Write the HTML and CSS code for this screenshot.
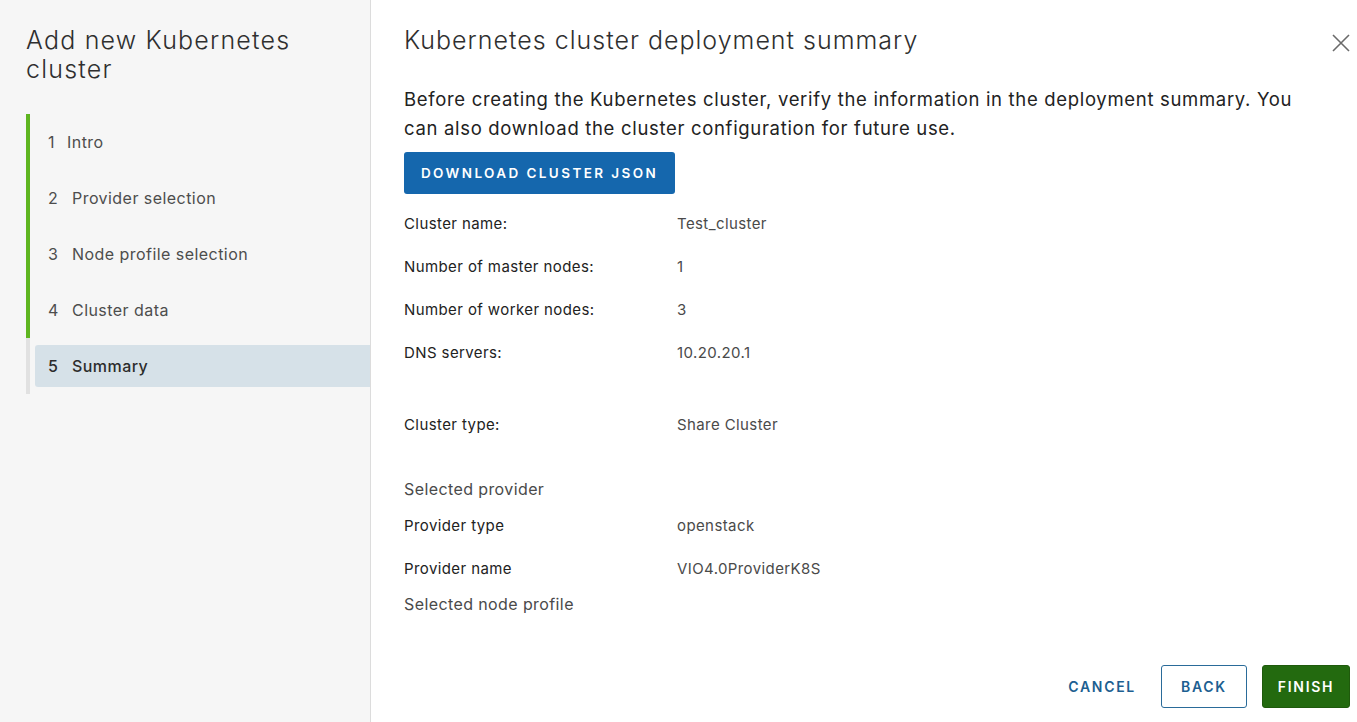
FILE: index.html
```html
<!DOCTYPE html>
<html>
<head>
<meta charset="utf-8">
<link rel="stylesheet" href="styles.css">
</head>
<body>
<div class="wizard">
  <aside class="side">
    <h1 class="side-title">Add new Kubernetes cluster</h1>
    <ol class="steps">
      <li class="step done"><span class="num">1</span><span class="lbl lbl-narrow">Intro</span></li>
      <li class="step done"><span class="num">2</span><span class="lbl">Provider selection</span></li>
      <li class="step done"><span class="num">3</span><span class="lbl">Node profile selection</span></li>
      <li class="step done"><span class="num">4</span><span class="lbl">Cluster data</span></li>
      <li class="step current"><span class="num">5</span><span class="lbl">Summary</span></li>
    </ol>
  </aside>
  <main class="main">
    <header class="main-head">
      <h2 class="main-title">Kubernetes cluster deployment summary</h2>
      <button class="close" aria-label="Close">
        <svg width="20" height="20" viewBox="0 0 20 20"><path d="M2 2 L18 18 M18 2 L2 18" stroke="#6a6a6a" stroke-width="1.6" fill="none"/></svg>
      </button>
    </header>
    <p class="intro">Before creating the Kubernetes cluster, verify the information in the deployment summary. You can also download the cluster configuration for future use.</p>
    <button class="btn-primary">DOWNLOAD CLUSTER JSON</button>
    <div class="rows">
      <div class="row"><span class="k">Cluster name:</span><span class="v">Test_cluster</span></div>
      <div class="row"><span class="k">Number of master nodes:</span><span class="v">1</span></div>
      <div class="row"><span class="k">Number of worker nodes:</span><span class="v">3</span></div>
      <div class="row"><span class="k">DNS servers:</span><span class="v">10.20.20.1</span></div>
      <div class="row row-gap"><span class="k">Cluster type:</span><span class="v">Share Cluster</span></div>
      <div class="section section-first">Selected provider</div>
      <div class="row"><span class="k">Provider type</span><span class="v">openstack</span></div>
      <div class="row"><span class="k">Provider name</span><span class="v">VIO4.0ProviderK8S</span></div>
      <div class="section">Selected node profile</div>
    </div>
    <footer class="actions">
      <button class="btn-link">CANCEL</button>
      <button class="btn-outline">BACK</button>
      <button class="btn-success">FINISH</button>
    </footer>
  </main>
</div>
</body>
</html>
```
FILE: styles.css
```css
* { box-sizing: border-box; }
html, body { margin: 0; padding: 0; height: 100%; }
body {
  font-family: "Inter", "Lato", sans-serif;
  color: #313131;
  background: #fff;
}
.wizard {
  display: flex;
  width: 1357px;
  height: 722px;
}
.side {
  width: 371px;
  flex: none;
  background: #f6f6f6;
  border-right: 1px solid #dcdcdc;
  padding: 26px 0 0 26px;
}
.side-title {
  margin: 0 0 30px 0;
  font-size: 25px;
  font-weight: 300;
  line-height: 29px;
  letter-spacing: 1.2px;
  color: #2f2f2f;
  width: 320px;
}
.steps {
  list-style: none;
  margin: 0;
  padding: 0;
  border-left: 4px solid #e1e1e1;
}
.step {
  position: relative;
  display: flex;
  align-items: center;
  height: 56px;
  font-size: 16px;
  letter-spacing: 0.45px;
  color: #4d4d4d;
  margin-left: -4px;
  border-left: 4px solid transparent;
}
.step.done { border-left-color: #5eb520; }
.step .num { width: 24px; padding-left: 18px; box-sizing: content-box; }
.step .lbl-narrow { margin-left: -5px; }
.step.current .num, .step.current .lbl { font-weight: 500; color: #2c2c2c; }
.step.current::before {
  content: "";
  position: absolute;
  left: 5px;
  right: 0;
  top: 7px;
  height: 42px;
  background: #d6e1e8;
  border-radius: 3px 0 0 3px;
}
.step.current span { position: relative; }

.main {
  flex: 1;
  position: relative;
  padding: 24px 0 0 33px;
}
.main-head {
  display: flex;
  justify-content: space-between;
  align-items: flex-start;
}
.main-title {
  margin: 0;
  font-size: 25px;
  font-weight: 300;
  line-height: 32px;
  letter-spacing: 1px;
  color: #2f2f2f;
}
.close {
  border: 0;
  background: none;
  padding: 0;
  margin: 9px 6px 0 0;
  cursor: pointer;
}
.intro {
  margin: 29px 0 8px 0;
  font-size: 18.5px;
  line-height: 29px;
  letter-spacing: 0.68px;
  width: 900px;
  color: #222;
}
.btn-primary {
  display: block;
  height: 42px;
  margin-top: 9px;
  padding: 0;
  background: #1567ad;
  color: #fff;
  border: 0;
  border-radius: 3px;
  font-family: inherit;
  font-size: 13.5px;
  font-weight: 600;
  letter-spacing: 2.4px;
  width: 271px;
}
.rows { margin-top: 8px; }
.row {
  display: flex;
  height: 43px;
  align-items: center;
  font-size: 15px;
  letter-spacing: 0.4px;
  color: #222;
}
.row .k { width: 273px; }
.row .v { color: #4a4a4a; }
.row-gap { margin-top: 29px; }
.section {
  font-size: 16px;
  letter-spacing: 0.4px;
  color: #4a4a4a;
  height: 29px;
  line-height: 29px;
}
.section-first { margin-top: 29px; }
.actions {
  position: absolute;
  right: 7px;
  bottom: 14px;
  display: flex;
  gap: 15px;
  align-items: center;
}
.actions button {
  height: 43px;
  font-family: inherit;
  font-size: 14px;
  font-weight: 600;
  letter-spacing: 1.7px;
  border-radius: 3px;
  cursor: pointer;
}
.btn-link {
  background: none;
  border: 0;
  color: #1d5f91;
  padding: 0 10px;
}
.btn-outline {
  background: #fff;
  border: 1px solid #2a6b99;
  color: #1d5f91;
  width: 86px;
}
.btn-success {
  background: #236a0f;
  border: 1px solid #1f5a0c;
  color: #fff;
  width: 88px;
}
```
